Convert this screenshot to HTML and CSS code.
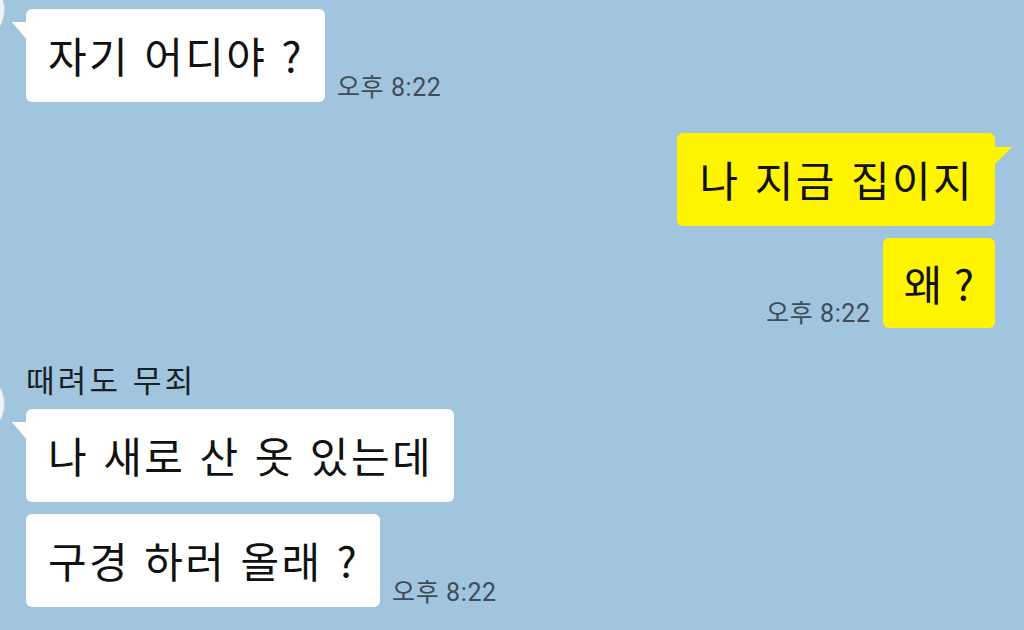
FILE: index.html
```html
<!DOCTYPE html>
<html lang="ko">
<head>
<meta charset="utf-8">
<link rel="stylesheet" href="styles.css">
</head>
<body>
<div class="chat">
  <div class="group left first">
    <div class="avatar"></div>
    <div class="row">
      <div class="bubble white tail">자기 어디야 ?</div>
      <span class="time">오후 8:22</span>
    </div>
  </div>

  <div class="group right">
    <div class="row">
      <div class="bubble yellow tail">나 지금 집이지</div>
    </div>
    <div class="row">
      <span class="time">오후 8:22</span>
      <div class="bubble yellow short">왜 ?</div>
    </div>
  </div>

  <div class="group left second">
    <div class="avatar"></div>
    <div class="name">때려도 무죄</div>
    <div class="row">
      <div class="bubble white tail">나 새로 산 옷 있는데</div>
    </div>
    <div class="row">
      <div class="bubble white">구경 하러 올래 ?</div>
      <span class="time">오후 8:22</span>
    </div>
  </div>
</div>
</body>
</html>
```

FILE: styles.css
```css
* { box-sizing: border-box; }
html, body {
  margin: 0;
  padding: 0;
  width: 1024px;
  height: 630px;
  overflow: hidden;
  background: #a1c4df;
}
body {
  font-family: "Noto Sans CJK KR", "Noto Sans", sans-serif;
  color: #111;
}
.chat {
  display: flex;
  flex-direction: column;
  padding: 9px 29px 0 26px;
}
.group {
  position: relative;
  display: flex;
  flex-direction: column;
  gap: 12px;
}
.group.left { align-items: flex-start; }
.group.right { align-items: flex-end; margin-top: 31px; gap: 12px; }
.group.second { margin-top: 33px; gap: 12px; }
.row {
  display: flex;
  align-items: flex-end;
  gap: 12px;
}
.bubble {
  position: relative;
  font-size: 42px;
  line-height: 50px;
  letter-spacing: 2.4px;
  padding: 21px 21px 22px 22px;
  border-radius: 6px;
  white-space: nowrap;
}
.bubble.short {
  letter-spacing: 0;
  padding: 20px 21px 20px 21px;
}
.white { background: #fff; }
.yellow { background: #fff500; }
.white.tail::before {
  content: "";
  position: absolute;
  top: 13px;
  left: -14px;
  width: 15px;
  height: 18px;
  background: #fff;
  clip-path: polygon(0 0, 100% 0, 100% 100%);
}
.yellow.tail::after {
  content: "";
  position: absolute;
  top: 14px;
  right: -17px;
  width: 18px;
  height: 18px;
  background: #fff500;
  clip-path: polygon(0 0, 100% 0, 0 100%);
}
.time {
  font-family: Roboto, "Noto Sans CJK KR", sans-serif;
  font-size: 25px;
  line-height: 28px;
  letter-spacing: 0.6px;
  color: #3f4c58;
  white-space: nowrap;
}
.name {
  font-size: 31px;
  line-height: 36px;
  letter-spacing: 3.2px;
  color: #1a1f24;
}
.avatar {
  position: absolute;
  left: -87px;
  width: 66px;
  height: 66px;
  border-radius: 50%;
  background: #f2f4f6;
  border: 1px solid #c9d3dc;
}
.first .avatar { top: -32px; }
.second .avatar { top: 10px; }
```
